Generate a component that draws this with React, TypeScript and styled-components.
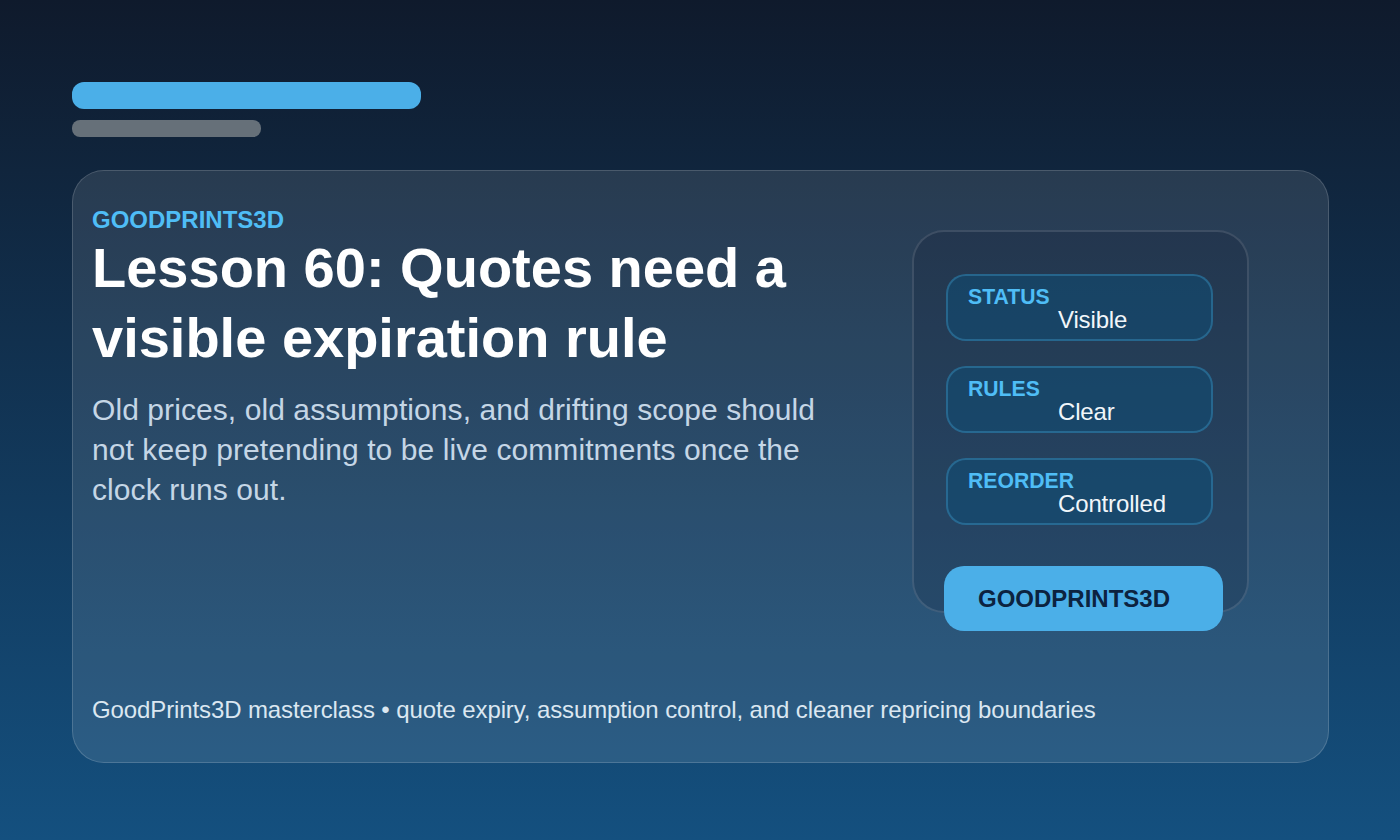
import React from 'react';
import styled, { createGlobalStyle } from 'styled-components';

const GlobalStyle = createGlobalStyle`
    html, body {
        margin: 0;
        padding: 0;
    }
    body {
        font-family: "Liberation Sans", Arial, sans-serif;
    }
`;

const rows = [
    { label: 'STATUS', value: 'Visible' },
    { label: 'RULES', value: 'Clear' },
    { label: 'REORDER', value: 'Controlled' },
];

export default function App() {
    return (
        <Page>
            <GlobalStyle />
            <TitleBar />
            <SubtitleBar />
            <Card>
                <Main>
                    <Eyebrow>GOODPRINTS3D</Eyebrow>
                    <Heading>Lesson 60: Quotes need a<br />visible expiration rule</Heading>
                    <Lead>
                        Old prices, old assumptions, and drifting scope should<br />
                        not keep pretending to be live commitments once the<br />
                        clock runs out.
                    </Lead>
                    <Footnote>GoodPrints3D masterclass • quote expiry, assumption control, and cleaner repricing boundaries</Footnote>
                </Main>
                <Panel>
                    {rows.map((row) => (
                        <Chip key={row.label}>
                            <ChipLabel>{row.label}</ChipLabel>
                            <ChipValue>{row.value}</ChipValue>
                        </Chip>
                    ))}
                    <Brand>GOODPRINTS3D</Brand>
                </Panel>
            </Card>
        </Page>
    );
}

const Page = styled.div`
    box-sizing: border-box;
    width: 1400px;
    height: 840px;
    overflow: hidden;
    padding: 82px 71px 0 72px;
    background: linear-gradient(180deg, #0f1a2c 0%, #14507f 100%);
`;

const TitleBar = styled.div`
    width: 349px;
    height: 27px;
    border-radius: 12px;
    background: #4bafe8;
`;

const SubtitleBar = styled.div`
    width: 189px;
    height: 17px;
    margin-top: 11px;
    border-radius: 8px;
    background: #667079;
`;

const Card = styled.div`
    box-sizing: border-box;
    display: flex;
    justify-content: space-between;
    width: 1257px;
    height: 593px;
    margin-top: 33px;
    padding: 0 79px 0 19px;
    border: 1px solid rgba(255, 255, 255, 0.16);
    border-radius: 32px;
    background: rgba(255, 255, 255, 0.1);
`;

const Main = styled.div`
    display: flex;
    flex-direction: column;
    flex: none;
    width: 800px;
`;

const Eyebrow = styled.div`
    margin-top: 36px;
    font-size: 24px;
    line-height: 26px;
    font-weight: 700;
    color: #4fbdf6;
`;

const Heading = styled.h1`
    margin: 0;
    font-size: 56px;
    line-height: 70px;
    font-weight: 700;
    color: #ffffff;
`;

const Lead = styled.p`
    margin: 17px 0 0;
    font-size: 30px;
    line-height: 40px;
    letter-spacing: 0.08px;
    color: #c5d6e6;
`;

const Footnote = styled.div`
    margin-top: auto;
    margin-bottom: 38px;
    font-size: 24px;
    line-height: 28px;
    letter-spacing: -0.11px;
    white-space: nowrap;
    color: #dbe7f1;
`;

const Panel = styled.div`
    box-sizing: border-box;
    display: flex;
    flex-direction: column;
    gap: 25px;
    flex: none;
    width: 337px;
    height: 383px;
    margin-top: 59px;
    padding: 42px 34px 0 32px;
    border: 2px solid rgba(255, 255, 255, 0.12);
    border-radius: 32px;
    background: rgba(15, 23, 42, 0.18);
`;

const Chip = styled.div`
    box-sizing: border-box;
    flex: none;
    height: 67px;
    padding: 9px 20px 0;
    border: 2px solid rgba(79, 189, 246, 0.28);
    border-radius: 20px;
    background: rgba(15, 76, 117, 0.55);
`;

const ChipLabel = styled.div`
    font-size: 21.2px;
    line-height: 23px;
    font-weight: 700;
    color: #4fbdf6;
`;

const ChipValue = styled.div`
    margin-left: 90px;
    font-size: 24px;
    line-height: 24px;
    letter-spacing: -0.15px;
    color: #f1f6fa;
`;

const Brand = styled.div`
    box-sizing: border-box;
    flex: none;
    width: 279px;
    height: 65px;
    margin: 16px 0 0 -2px;
    padding: 18px 0 0 34px;
    border-radius: 20px;
    background: #4bafe8;
    font-size: 24px;
    line-height: 30px;
    font-weight: 700;
    color: #0c2340;
`;
